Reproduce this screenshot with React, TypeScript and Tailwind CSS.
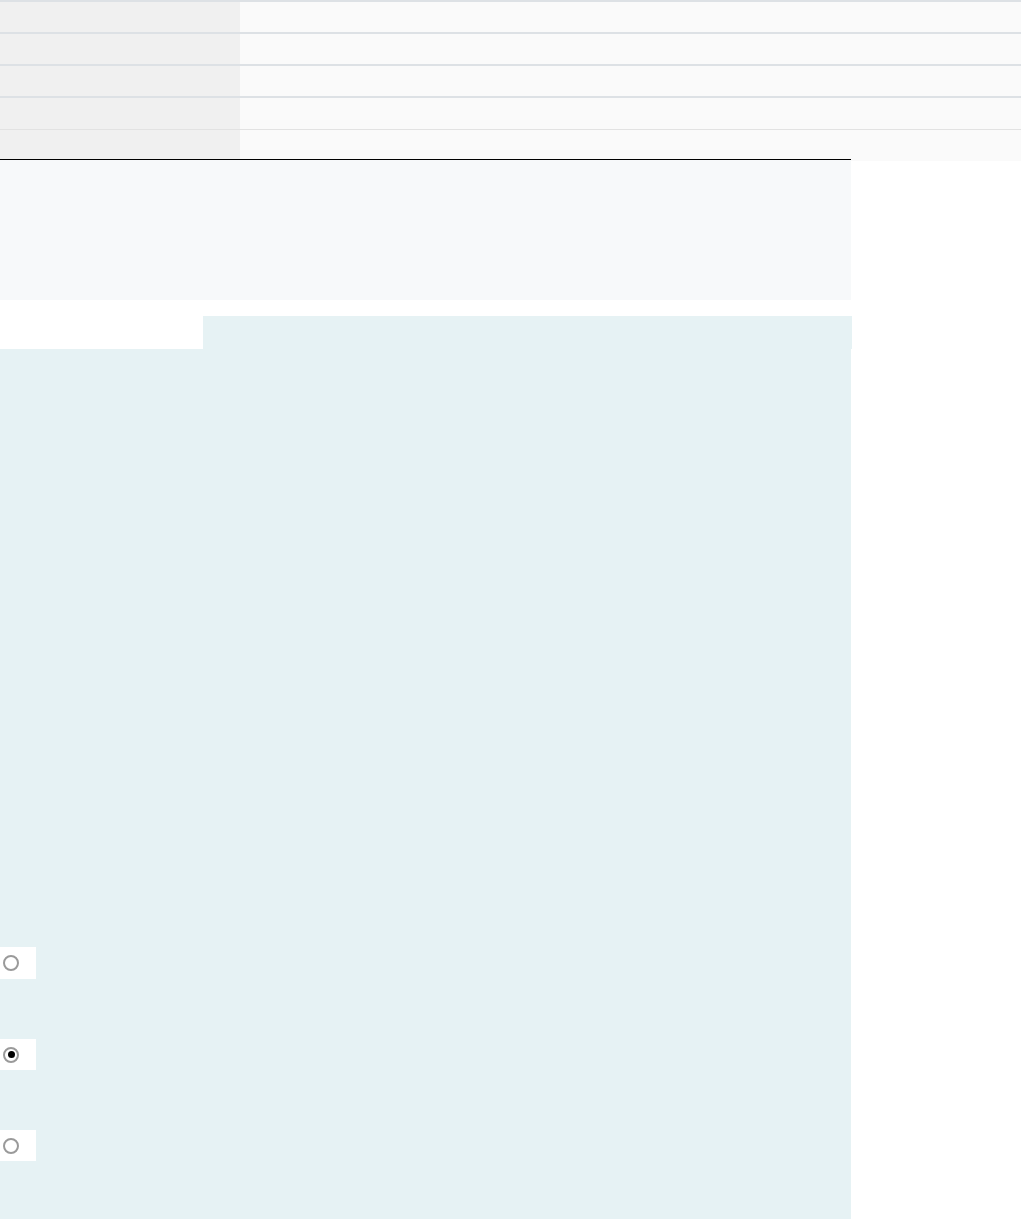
import React from "react";

function Radio({ checked, tall }: { checked?: boolean; tall?: boolean }) {
  return (
    <div
      className={
        tall
          ? "w-[36px] h-[32px] bg-white flex items-center pl-[3px]"
          : "w-[36px] h-[31px] bg-white flex items-center pl-[3px]"
      }
    >
      <div className="w-[16px] h-[16px] rounded-full border-2 border-[#9a9a9a] bg-white flex items-center justify-center">
        {checked && <div className="w-[7px] h-[7px] rounded-full bg-black" />}
      </div>
    </div>
  );
}

export default function App() {
  const rows = [0, 1, 2, 3, 4];
  return (
    <div className="w-full bg-white font-['Liberation_Sans',sans-serif]">
      {/* Tableau du haut */}
      <div className="w-full border-t-2 border-[#dde1e5]">
        {rows.map((r) => (
          <div
            key={r}
            className={
              r < 3
                ? "flex h-[32px] border-b-2 border-[#dde1e5]"
                : r === 3
                ? "flex h-[32px] border-b border-[#e2e2e2]"
                : "flex h-[31px]"
            }
          >
            <div className="w-[240px] bg-[#f0f0f0]" />
            <div className="flex-1 bg-[#fafafa]" />
          </div>
        ))}
      </div>

      {/* Bloc gris */}
      <div className="relative w-[851px] h-[141px] -mt-[2px] border-t border-black bg-[#f7f9fa]" />

      <div className="h-[16px]" />

      {/* Onglet */}
      <div className="flex h-[33px]">
        <div className="w-[203px]" />
        <div className="w-[649px] bg-[#e6f2f4]" />
      </div>

      {/* Bloc principal */}
      <div className="w-[851px] h-[870px] bg-[#e6f2f4] pt-[598px] flex flex-col gap-[60px]">
        <Radio tall />
        <Radio checked />
        <Radio />
      </div>
    </div>
  );
}
